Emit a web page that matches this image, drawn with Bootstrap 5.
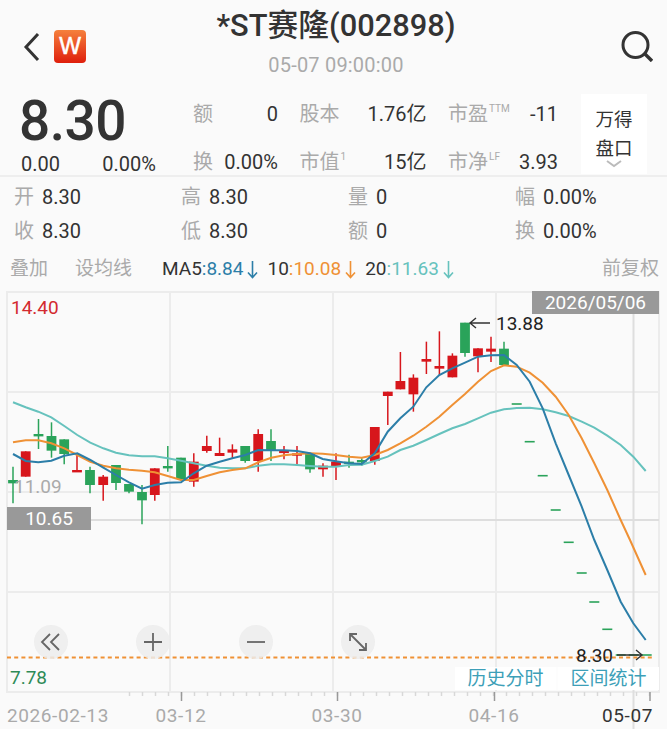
<!DOCTYPE html>
<html lang="zh">
<head>
<meta charset="utf-8">
<title>*ST赛隆(002898)</title>
<link href="https://cdn.jsdelivr.net/npm/bootstrap@5.3.0/dist/css/bootstrap.min.css" rel="stylesheet">
<style>
html,body{margin:0;height:729px;overflow:hidden}
body{background:#fafafa;color:#333;font-family:Roboto,"Noto Sans CJK SC",sans-serif;font-size:20px;line-height:1.2}
.topbar{height:90px}
.top-left{width:200px;padding:30px 0 0 23px;gap:14px}
.top-right{width:195px;padding:30px 14px 0 0}
.logo{width:32px;height:33px;border-radius:4px;background:linear-gradient(#f5803c,#df1f0c);color:#fff;font:400 23px "Liberation Sans",sans-serif;-webkit-text-stroke:.5px #fff}
.title{font-size:30.8px;font-weight:500;line-height:36px;margin-top:8px;white-space:nowrap}
.stamp{font-size:20px;letter-spacing:.2px;color:#aaa;line-height:24px;margin-top:9px}
.quote{height:87px;border-bottom:2px solid #eee;padding-left:21px}
.price-col{width:172px}
.price{font-size:55px;font-weight:500;line-height:50px;margin:6px 0 0 -2px;letter-spacing:-.5px}
.price-sub{margin-top:6px;width:135px}
.stats{display:grid;grid-template-columns:85px 127px 110px;column-gap:21.5px;grid-auto-rows:48px}
.label{color:#aaa}
.label sup{font-size:10px;top:-.9em;vertical-align:baseline;position:relative;margin-left:1px}
.panel{width:66px;height:80px;margin:4px 0 0 23px;background:#fff;font-size:18.5px;line-height:29px;padding-top:12px}
.panel svg{margin-top:-4px}
.ohlc{padding:3px 0 0 14px}
.ohlc-row{height:34px}
.ohlc-cell{width:167px;gap:8px;flex:none}
.ma{height:42px;padding:0 8px 0 10px;font-size:19px}
.lab-a{width:65px}
.lab-b{width:87px}
.ma-a{color:#2c7ea8}.ma-b{color:#ef9135}.ma-c{color:#66c2bd}
.ma-group{margin-right:9px}
.ma svg{margin-left:4px}
#chart{display:block;width:667px;height:439px}
#chart text{font-family:Roboto,"Noto Sans CJK SC",sans-serif;font-size:19px}
#chart text.date{letter-spacing:.6px}
#chart text.btn-text{font-size:19px}
</style>
</head>
<body>
<header class="topbar d-flex justify-content-between align-items-start">
  <div class="top-left d-flex align-items-center">
    <svg width="17" height="30" viewBox="0 0 17 30"><path d="M15 2 3 15l12 13" fill="none" stroke="#333" stroke-width="3"/></svg>
    <div class="logo d-flex align-items-center justify-content-center">W</div>
  </div>
  <div class="flex-grow-1 text-center">
    <div class="title">*ST赛隆(002898)</div>
    <div class="stamp">05-07 09:00:00</div>
  </div>
  <div class="top-right d-flex justify-content-end">
    <svg width="32" height="32" viewBox="0 0 32 32"><circle cx="14.500" cy="15" r="12.500" fill="none" stroke="#333" stroke-width="3"/><path d="m24 24 7 7" stroke="#333" stroke-width="3.400"/></svg>
  </div>
</header>

<section class="quote d-flex">
  <div class="price-col">
    <div class="price">8.30</div>
    <div class="price-sub d-flex justify-content-between"><span>0.00</span><span>0.00%</span></div>
  </div>
  <div class="stats align-items-center">
    <div class="d-flex justify-content-between"><span class="label">额</span><span>0</span></div>
    <div class="d-flex justify-content-between"><span class="label">股本</span><span>1.76亿</span></div>
    <div class="d-flex justify-content-between"><span class="label">市盈<sup>TTM</sup></span><span>-11</span></div>
    <div class="d-flex justify-content-between"><span class="label">换</span><span>0.00%</span></div>
    <div class="d-flex justify-content-between"><span class="label">市值<sup>1</sup></span><span>15亿</span></div>
    <div class="d-flex justify-content-between"><span class="label">市净<sup>LF</sup></span><span>3.93</span></div>
  </div>
  <div class="panel text-center">万得<br>盘口
    <svg class="d-block mx-auto" width="16" height="8" viewBox="0 0 16 8"><path d="m1 1 7 5 7-5" fill="none" stroke="#bbb" stroke-width="2"/></svg>
  </div>
</section>

<section class="ohlc">
  <div class="ohlc-row d-flex align-items-center">
    <div class="ohlc-cell d-flex"><span class="label">开</span><span>8.30</span></div>
    <div class="ohlc-cell d-flex"><span class="label">高</span><span>8.30</span></div>
    <div class="ohlc-cell d-flex"><span class="label">量</span><span>0</span></div>
    <div class="ohlc-cell d-flex"><span class="label">幅</span><span>0.00%</span></div>
  </div>
  <div class="ohlc-row d-flex align-items-center">
    <div class="ohlc-cell d-flex"><span class="label">收</span><span>8.30</span></div>
    <div class="ohlc-cell d-flex"><span class="label">低</span><span>8.30</span></div>
    <div class="ohlc-cell d-flex"><span class="label">额</span><span>0</span></div>
    <div class="ohlc-cell d-flex"><span class="label">换</span><span>0.00%</span></div>
  </div>
</section>

<section class="ma d-flex align-items-center">
  <span class="label lab-a">叠加</span>
  <span class="label lab-b">设均线</span>
  <span class="ma-group">MA5<span class="ma-a">:8.84<svg width="11" height="19" viewBox="0 0 11 19"><path d="M5.500 1v16M1 12.500l4.500 5 4.500-5" fill="none" stroke="currentColor" stroke-width="1.600"/></svg></span></span>
  <span class="ma-group">10<span class="ma-b">:10.08<svg width="11" height="19" viewBox="0 0 11 19"><path d="M5.500 1v16M1 12.500l4.500 5 4.500-5" fill="none" stroke="currentColor" stroke-width="1.600"/></svg></span></span>
  <span>20<span class="ma-c">:11.63<svg width="11" height="19" viewBox="0 0 11 19"><path d="M5.500 1v16M1 12.500l4.500 5 4.500-5" fill="none" stroke="currentColor" stroke-width="1.600"/></svg></span></span>
  <span class="label ms-auto">前复权</span>
</section>

<svg id="chart" viewBox="0 290 667 439">
  <g fill="none" stroke="#ececec" stroke-width="2">
    <path d="M7 292H659V692H7Z"/>
    <path d="M170 292V692M333 292V692M496 292V692"/>
    <path d="M7 392H659M7 492H659M7 592H659"/>
  </g>
  <path d="M7 520H659M633.500 292V729" fill="none" stroke="#dedede" stroke-width="2"/>
  <g id="ticks" stroke="#d8d8d8" stroke-width="1.500"></g>
  <g id="candles"></g>
  <path id="m20" fill="none" stroke="#66c2bd" stroke-width="2"/>
  <path id="m10" fill="none" stroke="#ef9135" stroke-width="2"/>
  <path id="m5" fill="none" stroke="#2c7ea8" stroke-width="2"/>

  <path d="M7 657.500H655" stroke="#ef9135" stroke-width="2" stroke-dasharray="4 3.200"/>

  <g fill="#ececec" fill-opacity=".85">
    <circle cx="51" cy="642" r="17"/><circle cx="153" cy="642" r="17"/><circle cx="256" cy="642" r="17"/><circle cx="358" cy="642" r="17"/>
  </g>
  <g fill="none" stroke="#666" stroke-width="1.800">
    <path d="M50 634l-8 8 8 8M59 634l-8 8 8 8"/>
    <path d="M153 633v18M144 642h18"/>
    <path d="M247 642h18"/>
    <path d="M350 634l16 16M350 641v-7h7M366 643v7h-7"/>
  </g>

  <rect x="532" y="291" width="127" height="23" fill="#999"/>
  <text x="595.500" y="309" text-anchor="middle" fill="#fff">2026/05/06</text>
  <text x="11" y="314" fill="#d32a2f">14.40</text>
  <text x="14" y="493" fill="#aaa">11.09</text>
  <rect x="7" y="507" width="84" height="23" fill="#999"/>
  <text x="49" y="525" text-anchor="middle" fill="#fff">10.65</text>
  <text x="10" y="684" fill="#2e8b57">7.78</text>
  <text x="496" y="330" fill="#222">13.88</text>
  <path d="M490 323H470M476 318l-6 5 6 5" fill="none" stroke="#333" stroke-width="1.400"/>
  <text x="576" y="662" fill="#222">8.30</text>
  <path d="M617 655H641M636 650l6 5-6 5" fill="none" stroke="#333" stroke-width="1.400"/>

  <rect x="455" y="667" width="101.500" height="23" fill="#fff"/>
  <rect x="557.500" y="667" width="101.500" height="23" fill="#fff"/>
  <text class="btn-text" x="505.500" y="685" text-anchor="middle" fill="#3d9fb8">历史分时</text>
  <text class="btn-text" x="608.500" y="685" text-anchor="middle" fill="#3d9fb8">区间统计</text>

  <text class="date" x="7" y="722" fill="#aaa">2026-02-13</text>
  <text class="date" x="181" y="722" text-anchor="middle" fill="#aaa">03-12</text>
  <text class="date" x="337" y="722" text-anchor="middle" fill="#aaa">03-30</text>
  <text class="date" x="494" y="722" text-anchor="middle" fill="#aaa">04-16</text>
  <text class="date" x="627.500" y="722" text-anchor="middle" fill="#333">05-07</text>
</svg>

<script src="https://cdn.jsdelivr.net/npm/bootstrap@5.3.0/dist/js/bootstrap.bundle.min.js"></script>
<script>
const NS='http://www.w3.org/2000/svg';
const el=(p,t,a)=>{const e=document.createElementNS(NS,t);for(const k in a)e.setAttribute(k,a[k]);p.appendChild(e);return e};
const tk=document.getElementById('ticks');
for(let x=129.5;x<655;x+=13){el(tk,'path',{d:`M${x} 692v4`})}
[181.5,337.5,494.5,650].forEach(x=>el(tk,'path',{d:`M${x} 692v9`,stroke:'#999'}));
const R='#d7161c',G='#2aa35a';
const y=v=>290+v/3;
const c=[
[13,G,530,570,580,640],[25.7,R,484,484,560,560],[38.5,G,387,432,437,477],[51.5,G,397,438,482,503],[64.2,G,448,448,492,523],
[77,R,490,540,544,544],[90,G,530,540,585,610],[103.2,R,555,560,585,632],[116,G,525,525,579,600],[129,G,582,582,605,610],
[142,G,585,606,631,703],[154.8,R,535,535,615,632],[167.8,G,468,528,535,545],[181,G,503,503,567,573],[193.8,R,490,515,575,590],
[206.8,R,437,468,483,488],[219.6,R,443,489,498,498],[232.4,R,463,478,488,505],[245.2,G,468,468,513,518],[258.2,R,418,432,513,545],
[271,G,418,453,483,513],[284,R,468,482,488,508],[297,R,468,490,494,523],[310,G,490,490,538,548],[323,R,520,527,538,560],
[336,R,490,515,530,570],[349,G,494,515,520,533],[361.8,G,505,510,515,527],[374.8,R,411,411,513,524],[387.8,R,305,305,318,405],
[400.4,R,186,273,298,298],[413.4,R,253,263,313,365],[426.4,R,155,207,215,252],[439.4,R,124,228,236,255],[452.4,R,190,197,262,262],
[465,G,98,98,189,200],[478,R,175,175,199,247],[491,R,140,176,185,216],[504,G,155,176,225,225]];
const g=document.getElementById('candles');
c.forEach(([x,col,a,b,d,e])=>{
  el(g,'path',{d:`M${x} ${y(a)}V${y(e)}`,stroke:col,'stroke-width':1.5});
  el(g,'rect',{x:x-4.9,y:y(b),width:9.8,height:Math.max(y(d)-y(b),2.4),fill:col});
});
[[516.7,404],[529.7,441.7],[542.7,475.7],[555.7,510],[568.7,542.3],[581.7,573],[594.3,602],[607.3,629.3],[620.7,655],[633.7,655],[646.7,655]].forEach(([x,v])=>
  el(g,'path',{d:`M${x-5} ${v}h10`,stroke:G,'stroke-width':1.6}));
const L=p=>p.map(([a,b])=>[a/3,290+b/3]),Rt=p=>p.map(([a,b])=>[340+a/3,290+b/3]),B=p=>p.map(([a,b])=>[340+a/3,540+b/3]);
const line=(id,p)=>document.getElementById(id).setAttribute('d','M'+p.map(q=>q[0].toFixed(1)+' '+q[1].toFixed(1)).join('L'));
line('m5',[...L([[39,492],[77,513],[115,517],[154,512],[193,497],[232,490],[271,510],[310,533],[348,555],[387,577],[426,596],[464,585],[503,578],[543,577],[581,550],[620,527],[659,515],[697,505],[736,495],[775,480],[814,481],[852,481],[891,483],[930,490],[968,507],[1007,514]]),
...Rt([[27,520],[65,522],[104,490],[143,425],[181,385],[220,350],[259,292],[298,255],[337,235],[375,218],[414,200],[453,196],[492,195],[530,225],[569,275],[608,355],[647,460],[686,555],[725,650],[763,750]]),
...B([[802,90],[842,185],[880,250],[917,300]])]);
line('m10',[...L([[39,457],[77,451],[115,451],[154,460],[193,475],[232,495],[271,515],[310,527],[348,535],[387,539],[426,542],[464,547],[503,558],[543,570],[581,570],[620,558],[659,547],[697,540],[736,535],[775,517],[814,503],[852,496],[891,492],[930,490],[968,491],[1007,495]]),
...Rt([[27,500],[65,503],[104,495],[143,480],[181,460],[220,437],[259,410],[298,380],[337,345],[375,312],[414,275],[453,243],[492,226],[530,230],[569,248],[608,278],[647,320],[686,375],[725,445],[763,520],[802,600],[842,690],[870,750]]),
...B([[917,105]])]);
line('m20',[...L([[39,337],[77,352],[115,365],[154,382],[193,408],[232,435],[271,458],[310,475],[348,488],[387,496],[426,499],[464,499],[503,505],[543,512],[581,520],[620,527],[659,533],[697,535],[736,535],[775,527],[814,523],[852,523],[891,525],[930,528],[968,530],[1007,530]]),
...Rt([[27,525],[65,524],[104,513],[143,500],[181,480],[220,467],[259,450],[298,432],[337,415],[375,402],[414,385],[453,368],[492,358],[530,354],[569,353],[608,358],[647,367],[686,378],[725,395],[763,413],[802,437],[842,465],[880,500],[917,543]])]);
</script>
</body>
</html>
